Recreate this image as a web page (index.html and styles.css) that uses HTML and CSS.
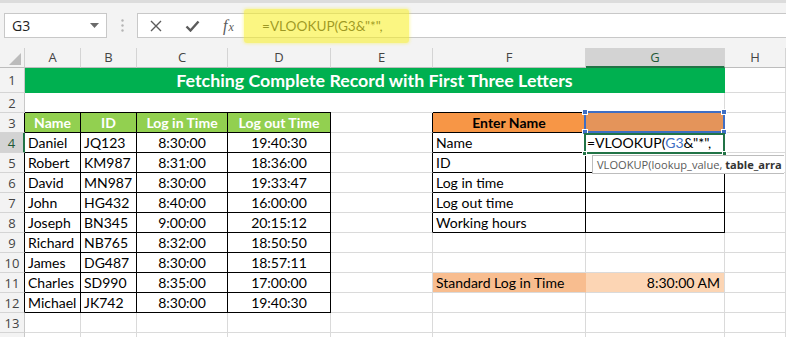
FILE: index.html
```html
<!DOCTYPE html>
<html>
<head>
<meta charset="utf-8">
<link rel="stylesheet" href="styles.css">
</head>
<body>
<div class="toolbar">
  <div class="namebox">
    <span>G3</span>
    <svg class="caret" width="9" height="5" viewBox="0 0 9 5"><path d="M0 0 H9 L4.5 5 Z" fill="#6a6a6a"/></svg>
  </div>
  <div class="dots">
    <svg width="3" height="13" viewBox="0 0 3 13"><circle cx="1.5" cy="1.5" r="1.2" fill="#b4b4b4"/><circle cx="1.5" cy="6.5" r="1.2" fill="#b4b4b4"/><circle cx="1.5" cy="11.5" r="1.2" fill="#b4b4b4"/></svg>
  </div>
  <div class="fbar">
    <div class="fbtn">
      <svg width="12" height="12" viewBox="0 0 12 12"><path d="M1 1 L11 11 M11 1 L1 11" stroke="#5b5b5b" stroke-width="1.4" fill="none"/></svg>
    </div>
    <div class="fbtn">
      <svg width="15" height="12" viewBox="0 0 15 12"><path d="M1.5 6.5 L5.5 10.5 L13.5 1.5" stroke="#5b5b5b" stroke-width="2.4" fill="none"/></svg>
    </div>
    <div class="fbtn fx"><span class="f">f</span><span class="x">x</span></div>
    <div class="finput">
      <span class="ftext">=VLOOKUP(G3&amp;"*",</span>
      <span class="marker"></span>
    </div>
  </div>
</div>

<div class="sheet">
  <!-- column headers -->
  <div class="corner"><svg width="25" height="20" viewBox="0 0 25 20"><path d="M9 17 H21 V5 Z" fill="#bcbcbc"/></svg></div>
  <div class="ch">A</div><div class="ch">B</div><div class="ch">C</div><div class="ch">D</div>
  <div class="ch">E</div><div class="ch">F</div><div class="ch sel">G</div><div class="ch">H</div>

  <!-- row 1 -->
  <div class="rh">1</div>
  <div class="title">Fetching Complete Record with First Three Letters</div>
  <div class="c"></div>

  <!-- row 2 -->
  <div class="rh">2</div>
  <div class="c span4 nor bk"></div>
  <div class="c nor"></div>
  <div class="c span2 bk"></div>
  <div class="c"></div>

  <!-- row 3 -->
  <div class="rh tb">3</div>
  <div class="c t hd">Name</div>
  <div class="c t hd">ID</div>
  <div class="c t hd">Log in Time</div>
  <div class="c t hd">Log out Time</div>
  <div class="c er"></div>
  <div class="c t enter">Enter Name</div>
  <div class="c t g3"><span class="ref"><i class="h tl"></i><i class="h tr"></i><i class="h bl"></i><i class="h br"></i></span></div>
  <div class="c"></div>

  <!-- row 4 -->
  <div class="rh tb sel">4</div>
  <div class="c t">Daniel</div>
  <div class="c t">JQ123</div>
  <div class="c t ctr">8:30:00</div>
  <div class="c t ctr">19:40:30</div>
  <div class="c er"></div>
  <div class="c t">Name</div>
  <div class="c t edit">=VLOOKUP(<span class="blue">G3</span>&amp;"*",<span class="act"><i class="g gl"></i><i class="g gr"></i></span><span class="tip">VLOOKUP(lookup_value, <b>table_arra</b></span></div>
  <div class="c"></div>

  <!-- row 5 -->
  <div class="rh tb">5</div>
  <div class="c t">Robert</div>
  <div class="c t">KM987</div>
  <div class="c t ctr">8:31:00</div>
  <div class="c t ctr">18:36:00</div>
  <div class="c er"></div>
  <div class="c t">ID</div>
  <div class="c t"></div>
  <div class="c"></div>

  <!-- row 6 -->
  <div class="rh tb">6</div>
  <div class="c t">David</div>
  <div class="c t">MN987</div>
  <div class="c t ctr">8:30:00</div>
  <div class="c t ctr">19:33:47</div>
  <div class="c er"></div>
  <div class="c t">Log in time</div>
  <div class="c t"></div>
  <div class="c"></div>

  <!-- row 7 -->
  <div class="rh tb">7</div>
  <div class="c t">John</div>
  <div class="c t">HG432</div>
  <div class="c t ctr">8:40:00</div>
  <div class="c t ctr">16:00:00</div>
  <div class="c er"></div>
  <div class="c t">Log out time</div>
  <div class="c t"></div>
  <div class="c"></div>

  <!-- row 8 -->
  <div class="rh tb">8</div>
  <div class="c t">Joseph</div>
  <div class="c t">BN345</div>
  <div class="c t ctr">9:00:00</div>
  <div class="c t ctr">20:15:12</div>
  <div class="c er"></div>
  <div class="c t">Working hours</div>
  <div class="c t"></div>
  <div class="c"></div>

  <!-- row 9 -->
  <div class="rh tb">9</div>
  <div class="c t">Richard</div>
  <div class="c t">NB765</div>
  <div class="c t ctr">8:32:00</div>
  <div class="c t ctr">18:50:50</div>
  <div class="c"></div><div class="c"></div><div class="c"></div><div class="c"></div>

  <!-- row 10 -->
  <div class="rh tb">10</div>
  <div class="c t">James</div>
  <div class="c t">DG487</div>
  <div class="c t ctr">8:30:00</div>
  <div class="c t ctr">18:57:11</div>
  <div class="c"></div><div class="c"></div><div class="c"></div><div class="c"></div>

  <!-- row 11 -->
  <div class="rh tb">11</div>
  <div class="c t">Charles</div>
  <div class="c t">SD990</div>
  <div class="c t ctr">8:35:00</div>
  <div class="c t ctr">17:00:00</div>
  <div class="c"></div>
  <div class="c std">Standard Log in Time</div>
  <div class="c stdv">8:30:00 AM</div>
  <div class="c"></div>

  <!-- row 12 -->
  <div class="rh tb">12</div>
  <div class="c t">Michael</div>
  <div class="c t">JK742</div>
  <div class="c t ctr">8:30:00</div>
  <div class="c t ctr">19:40:30</div>
  <div class="c"></div><div class="c"></div><div class="c"></div><div class="c"></div>

  <!-- row 13 -->
  <div class="rh">13</div>
  <div class="c"></div><div class="c"></div><div class="c"></div><div class="c"></div>
  <div class="c"></div><div class="c"></div><div class="c"></div><div class="c"></div>

  <!-- row 14 (partly visible) -->
  <div class="rh"></div>
  <div class="c"></div><div class="c"></div><div class="c"></div><div class="c"></div>
  <div class="c"></div><div class="c"></div><div class="c"></div><div class="c"></div>
</div>
</body>
</html>
```

FILE: styles.css
```css
* { box-sizing: border-box; }

body {
  margin: 0;
  width: 786px;
  height: 337px;
  overflow: hidden;
  background: #ffffff;
  font-family: Lato, "Open Sans", sans-serif;
  color: #000;
}

/* ---------- formula toolbar ---------- */
.toolbar {
  height: 48px;
  background: #f3f3f3;
  border-top: 3px solid #dcdcdc;
  display: flex;
  align-items: flex-start;
  padding: 10px 0 0 4px;
}

.namebox {
  width: 103px;
  height: 25px;
  background: #fff;
  border: 1px solid #c8c8c8;
  display: flex;
  align-items: center;
  justify-content: space-between;
  padding: 0 7px 0 7px;
  font-family: "Open Sans", sans-serif;
  font-size: 14px;
  color: #222;
}

.dots {
  width: 30px;
  height: 25px;
  display: flex;
  align-items: center;
  justify-content: center;
}

.fbar {
  flex: 1;
  height: 25px;
  background: #fff;
  border: 1px solid #c8c8c8;
  border-right: none;
  display: flex;
  align-items: center;
}

.fbtn {
  width: 36px;
  height: 100%;
  display: flex;
  align-items: center;
  justify-content: center;
}

.fbtn.fx {
  width: 37px;
  font-family: "Liberation Serif", serif;
  font-style: italic;
  color: #5b5b5b;
  font-size: 16px;
}
.fbtn.fx .x { font-size: 12px; margin-left: 1px; margin-top: 3px; }

.finput {
  position: relative;
  height: 100%;
  flex: 1;
  display: flex;
  align-items: center;
  padding-left: 15px;
}

.ftext {
  font-family: Lato, sans-serif;
  font-size: 13.6px;
  color: #1f1f1f;
  position: relative;
  z-index: 1;
}

.marker {
  position: absolute;
  left: -3px;
  top: -5px;
  width: 165px;
  height: 34px;
  background: rgba(248, 240, 40, 0.58);
  border-radius: 3px;
  box-shadow: 0 0 3px 1px rgba(248, 240, 40, 0.35);
  z-index: 2;
}

/* ---------- sheet grid ---------- */
.sheet {
  display: grid;
  grid-template-columns: 25px 56px 56px 91px 103px 102px 153px 139px 61px;
  grid-template-rows: 20px 25px repeat(13, 20px);
  font-size: 14px;
}

.corner {
  background: #f3f3f3;
  border-right: 1px solid #d0d0d0;
  border-bottom: 1px solid #bdbdbd;
}
.corner svg { display: block; }

.ch {
  background: #f3f3f3;
  border-right: 1px solid #d4d4d4;
  border-bottom: 1px solid #bdbdbd;
  text-align: center;
  font-family: "Open Sans", sans-serif;
  font-size: 13px;
  line-height: 19px;
  color: #444;
}
.ch.sel {
  background: #d3d3d3;
  border-bottom: 2px solid #217346;
  color: #1f5a36;
}

.rh {
  background: #f3f3f3;
  border-right: 1px solid #c8c8c8;
  border-bottom: 1px solid #d4d4d4;
  display: flex;
  align-items: center;
  justify-content: center;
  font-family: "Open Sans", sans-serif;
  font-size: 13px;
  color: #444;
}
.rh.tb { border-right-color: #000; }
.rh.sel {
  background: #d3d3d3;
  border-right: 2px solid #217346;
  color: #1f5a36;
}

.c {
  border-right: 1px solid #dadada;
  border-bottom: 1px solid #dadada;
  padding: 1px 3px 0 3px;
  line-height: 18px;
  white-space: nowrap;
  font-size: 14px;
}

.span4 { grid-column: span 4; }
.span2 { grid-column: span 2; }
.nor { border-right: none; }
.bk { border-bottom-color: #000; }
.er { border-right-color: #000; }

.title {
  grid-column: 2 / 9;
  background: #00b050;
  color: #fff;
  font-weight: 700;
  font-size: 17.8px;
  text-align: center;
  line-height: 25px;
  border-right: 1px solid #00b050;
}

.t {
  border-right-color: #000;
  border-bottom-color: #000;
}
.ctr { text-align: center; }

.hd {
  background: #92d050;
  color: #fff;
  font-weight: 700;
  text-align: center;
}

.enter {
  background: #f79646;
  font-weight: 700;
  text-align: center;
}

.g3 {
  background: #e4945a;
  position: relative;
}

.ref {
  position: absolute;
  left: -2px;
  top: -2px;
  right: -1px;
  bottom: -1px;
  border: 2px solid #3e6ec4;
}
.h {
  position: absolute;
  width: 6px;
  height: 6px;
  background: #3e6ec4;
  border: 1px solid #fff;
}
.h.tl { left: -4px; top: -4px; }
.h.tr { right: -4px; top: -4px; }
.h.bl { left: -4px; bottom: -4px; }
.h.br { right: -4px; bottom: -4px; }

.edit {
  position: relative;
  padding-left: 1px;
}
.blue { color: #3e6ec4; }

.act {
  position: absolute;
  left: -2px;
  top: 0;
  right: -1px;
  bottom: -2px;
  border: 2px solid #217346;
}
.g {
  position: absolute;
  width: 5px;
  height: 5px;
  background: #217346;
  border: 1px solid #fff;
  bottom: -4px;
}
.g.gl { left: -4px; }
.g.gr { right: -4px; }

.tip {
  position: absolute;
  left: 6px;
  top: 22px;
  height: 19px;
  padding: 0 2px 0 4px;
  background: #fff;
  border: 1px solid #bdbdbd;
  border-right: none;
  font-family: "Open Sans", sans-serif;
  font-size: 11.1px;
  line-height: 17px;
  color: #5a5a5a;
  z-index: 5;
}
.tip b { color: #333; font-weight: 700; }

.std {
  background: #f8bd8f;
  border-right-color: #f8bd8f;
}
.stdv {
  background: #fcd5b4;
  text-align: right;
  padding-right: 4px;
}
```
